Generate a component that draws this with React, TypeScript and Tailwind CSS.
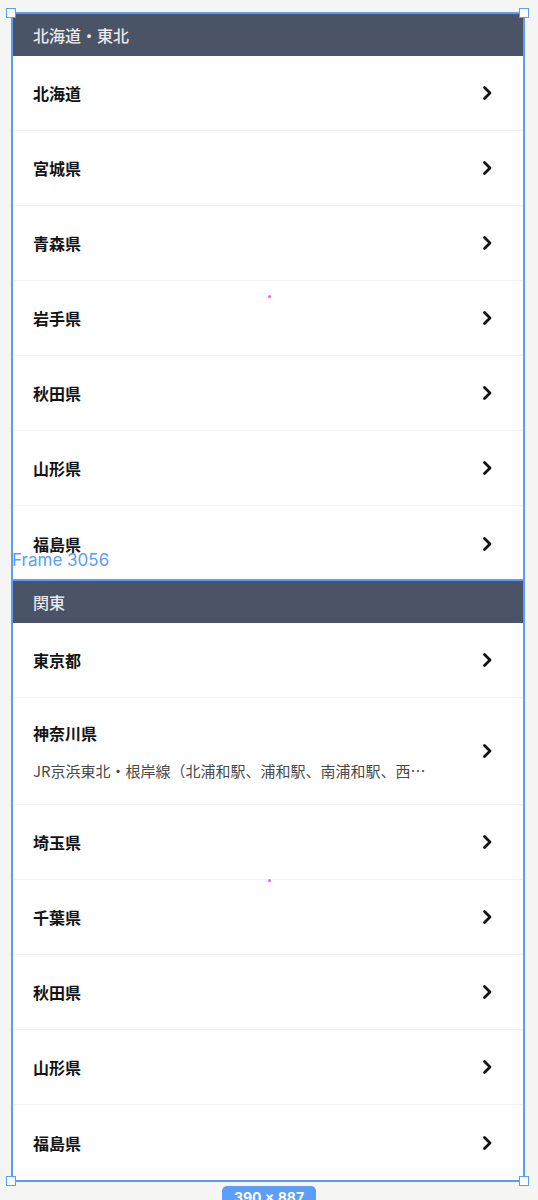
import React from 'react';

interface Row {
  name: string;
  sub?: string;
}

interface Section {
  title: string;
  rows: Row[];
}

const sections: Section[] = [
  {
    title: '北海道・東北',
    rows: [
      { name: '北海道' },
      { name: '宮城県' },
      { name: '青森県' },
      { name: '岩手県' },
      { name: '秋田県' },
      { name: '山形県' },
      { name: '福島県' },
    ],
  },
  {
    title: '関東',
    rows: [
      { name: '東京都' },
      {
        name: '神奈川県',
        sub: 'JR京浜東北・根岸線（北浦和駅、浦和駅、南浦和駅、西浦和駅、武蔵浦和駅）',
      },
      { name: '埼玉県' },
      { name: '千葉県' },
      { name: '秋田県' },
      { name: '山形県' },
      { name: '福島県' },
    ],
  },
];

const font = { fontFamily: '"Noto Sans CJK JP", "Noto Sans", sans-serif' };
const uiFont = { fontFamily: 'Inter, "Liberation Sans", Arial, sans-serif' };

function Chevron() {
  return (
    <svg width="20" height="20" viewBox="0 0 20 20" className="shrink-0">
      <path
        d="M7.5 4.5 L13 10 L7.5 15.5"
        fill="none"
        stroke="#111111"
        strokeWidth="2.8"
        strokeLinecap="round"
        strokeLinejoin="round"
      />
    </svg>
  );
}

function PrefRow({ row, last }: { row: Row; last: boolean }) {
  return (
    <div
      className={`flex items-center bg-white pl-[20px] pr-[26px] ${
        row.sub ? 'h-[107px]' : 'h-[75px]'
      } ${last ? '' : 'border-b border-[#f1f1f1]'}`}
    >
      <div className="flex-1 min-w-0 pr-[44px]">
        <p className="text-[16px] leading-[22px] font-bold text-[#141414]">{row.name}</p>
        {row.sub && (
          <p className="mt-[17px] text-[15px] leading-[20px] text-[#4a4a4a] truncate">
            {row.sub}
          </p>
        )}
      </div>
      <Chevron />
    </div>
  );
}

function RegionSection({ section, outlined }: { section: Section; outlined?: boolean }) {
  return (
    <div className="relative">
      {outlined && (
        <div className="absolute left-[-2px] right-[-2px] top-[-2px] h-[2px] bg-[#5b9df7]" />
      )}
      <div className="h-[42px] flex items-center bg-[#4b5466] px-[20px]">
        <span className="text-[16px] font-medium text-[#e9eaed]">{section.title}</span>
      </div>
      {section.rows.map((row, i) => (
        <PrefRow key={i} row={row} last={i === section.rows.length - 1} />
      ))}
    </div>
  );
}

function Handle({ className }: { className: string }) {
  return (
    <div
      className={`absolute w-[10px] h-[10px] bg-white border-[1.5px] border-[#5b9df7] ${className}`}
    />
  );
}

export default function App() {
  return (
    <div className="w-[538px] h-[1200px] overflow-hidden bg-[#f5f5f3] pt-[12px] pl-[11px]" style={font}>
      <div className="relative w-[514px] border-2 border-[#5b9df7]">
        <RegionSection section={sections[0]} />
        <RegionSection section={sections[1]} outlined />

        {/* figma selection overlay */}
        <span
          className="absolute left-[-1px] top-[535px] text-[17px] leading-[22px] text-[#5b9df7]"
          style={uiFont}
        >
          Frame 3056
        </span>
        <div className="absolute left-[255px] top-[281px] w-[3px] h-[3px] rounded-full bg-[#f25fd0]" />
        <div className="absolute left-[255px] top-[865px] w-[3px] h-[3px] rounded-full bg-[#f25fd0]" />
        <Handle className="left-[-7px] top-[-6px]" />
        <Handle className="right-[-6px] top-[-6px]" />
        <Handle className="left-[-7px] bottom-[-6px]" />
        <Handle className="right-[-6px] bottom-[-6px]" />
        <div
          className="absolute left-[209px] bottom-[-30px] w-[94px] h-[24px] rounded-[5px] bg-[#5b9df7] text-white text-[14px] leading-[24px] font-bold text-center"
          style={uiFont}
        >
          390 × 887
        </div>
      </div>
    </div>
  );
}
